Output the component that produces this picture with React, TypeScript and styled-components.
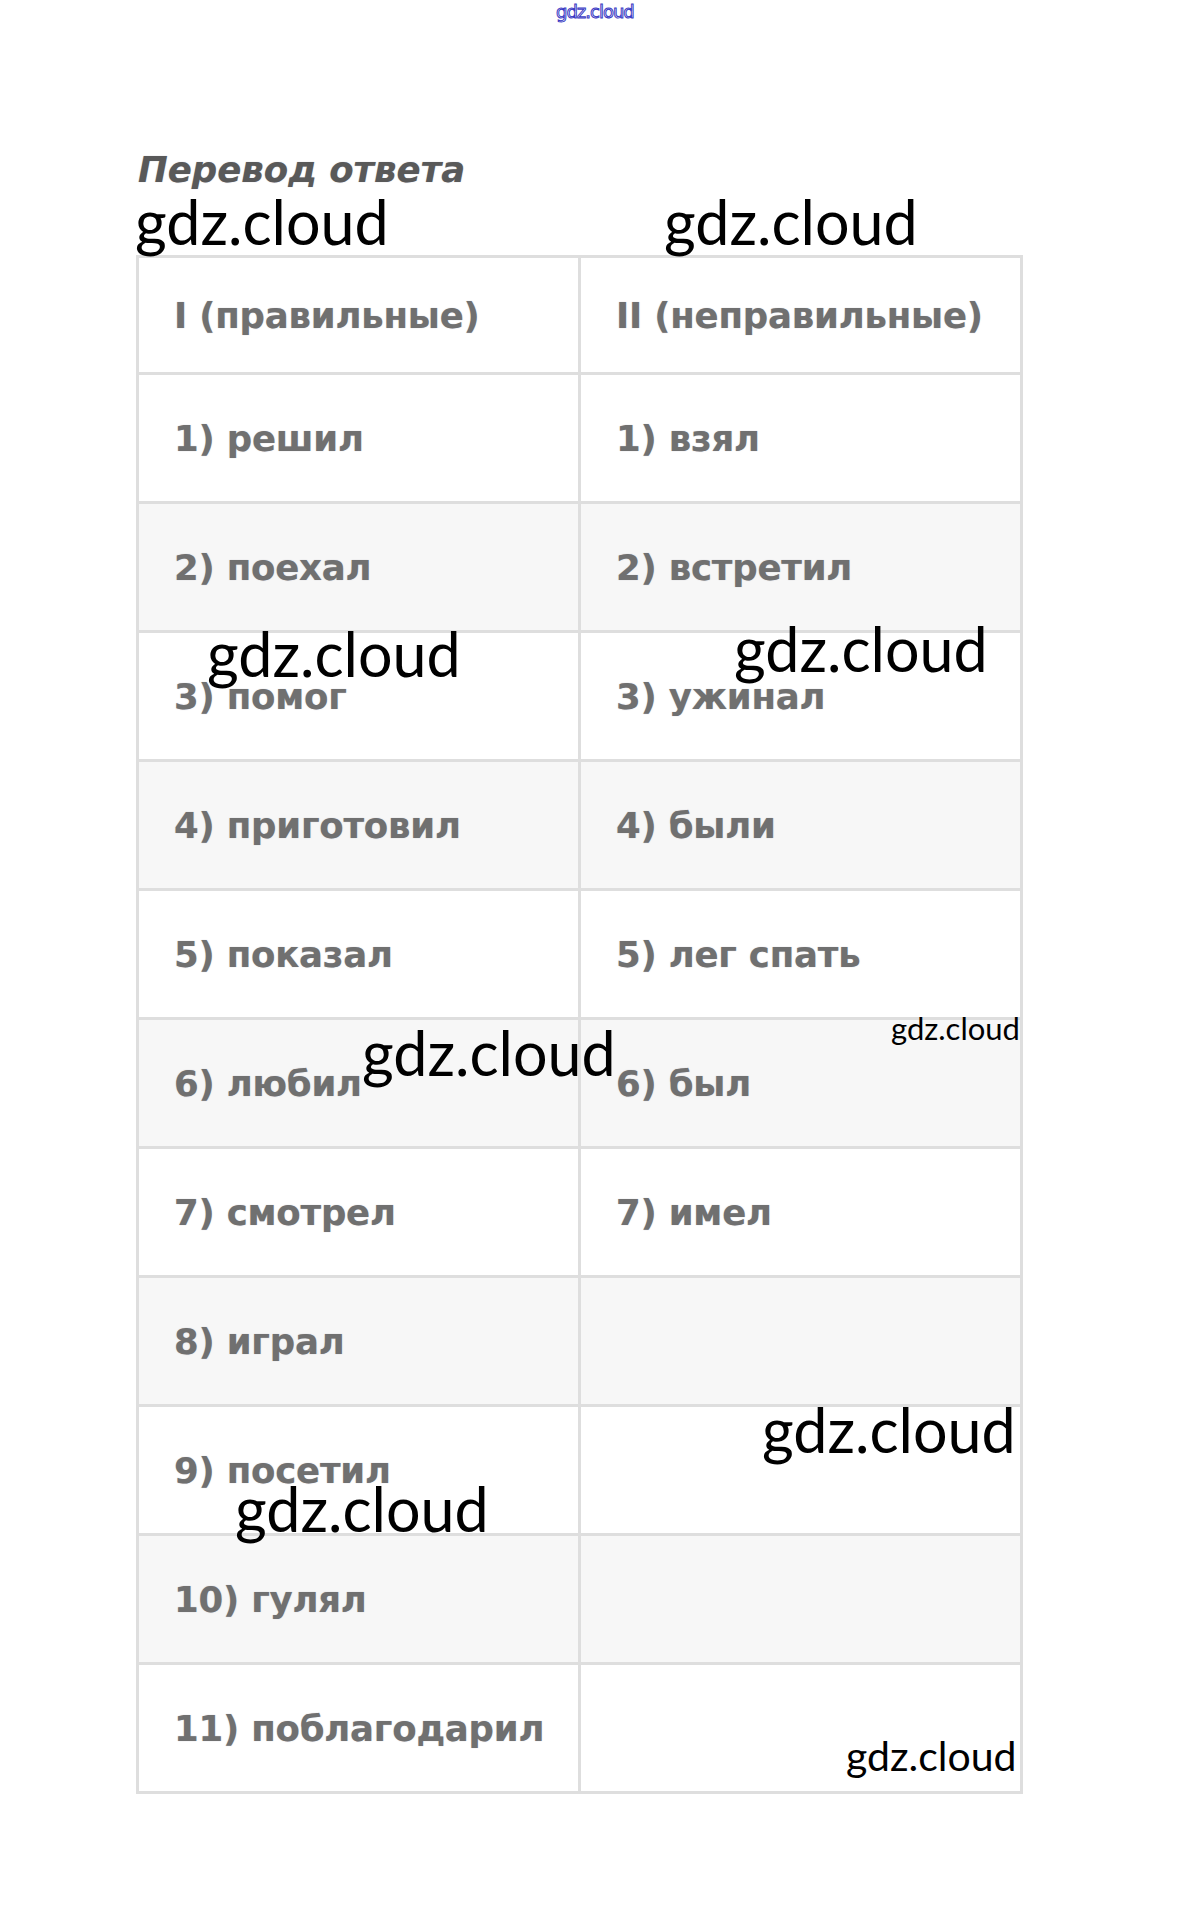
import React from "react";
import styled, { createGlobalStyle } from "styled-components";

const Global = createGlobalStyle`
  html, body { margin: 0; padding: 0; background: #ffffff; }
  body { font-family: "DejaVu Sans", Verdana, sans-serif; }
`;

const Page = styled.div`
  position: relative;
  width: 1189px;
  height: 1921px;
  overflow: hidden;
  background: #fff;
`;

const Content = styled.div`
  display: flex;
  flex-direction: column;
  padding: 149px 0 0 136px;
`;

const Title = styled.div`
  font-family: "DejaVu Sans", Verdana, sans-serif;
  font-style: italic;
  font-weight: 700;
  font-size: 35.5px;
  line-height: 41px;
  color: #595959;
  text-shadow: 0 0 1px rgba(120, 120, 140, 0.6);
  margin: 0 0 65px 2px;
`;

const Table = styled.table`
  width: 887px;
  border-collapse: collapse;
  table-layout: fixed;
  border: 3px solid #dedede;
`;

const Row = styled.tr<{ $shade?: boolean; $h: number }>`
  height: ${(p) => p.$h}px;
  background: ${(p) => (p.$shade ? "#f7f7f7" : "#ffffff")};
`;

const Cell = styled.td`
  border: 3px solid #dedede;
  padding: 0 0 0 35px;
  vertical-align: middle;
  font-family: "DejaVu Sans", Verdana, sans-serif;
  font-weight: 700;
  font-size: 35.5px;
  color: #707070;
  letter-spacing: -0.2px;
  white-space: nowrap;
  text-shadow: 0 0 1px rgba(110, 110, 130, 0.5);
`;

const Mark = styled.div<{ $size: number }>`
  position: absolute;
  font-family: Lato, "Open Sans", sans-serif;
  font-size: ${(p) => p.$size}px;
  line-height: 1;
  color: #000;
  white-space: nowrap;
`;

const TopMark = styled.div`
  position: absolute;
  left: 556px;
  top: 3px;
  font-family: "DejaVu Sans", Verdana, sans-serif;
  font-size: 18px;
  line-height: 1;
  letter-spacing: -1px;
  color: #ffffff;
  -webkit-text-stroke: 1px #3b3bc4;
`;

const rows: [string, string][] = [
  ["1) решил", "1) взял"],
  ["2) поехал", "2) встретил"],
  ["3) помог", "3) ужинал"],
  ["4) приготовил", "4) были"],
  ["5) показал", "5) лег спать"],
  ["6) любил", "6) был"],
  ["7) смотрел", "7) имел"],
  ["8) играл", ""],
  ["9) посетил", ""],
  ["10) гулял", ""],
  ["11) поблагодарил", ""],
];

const marks: { x: number; y: number; s: number }[] = [
  { x: 135, y: 191, s: 61 },
  { x: 664, y: 191, s: 61 },
  { x: 207, y: 623, s: 61 },
  { x: 734, y: 618, s: 61 },
  { x: 362, y: 1022, s: 61 },
  { x: 762, y: 1399, s: 61 },
  { x: 235, y: 1478, s: 61 },
  { x: 891, y: 1013, s: 31 },
  { x: 846, y: 1735, s: 41 },
];

export default function App() {
  return (
    <Page>
      <Global />
      <TopMark>gdz.cloud</TopMark>
      <Content>
        <Title>Перевод ответа</Title>
        <Table>
          <tbody>
            <Row $h={117}>
              <Cell>I (правильные)</Cell>
              <Cell>II (неправильные)</Cell>
            </Row>
            {rows.map(([a, b], i) => (
              <Row key={i} $h={129} $shade={i % 2 === 1}>
                <Cell>{a}</Cell>
                <Cell>{b}</Cell>
              </Row>
            ))}
          </tbody>
        </Table>
      </Content>
      {marks.map((m, i) => (
        <Mark key={i} $size={m.s} style={{ left: m.x, top: m.y }}>
          gdz.cloud
        </Mark>
      ))}
    </Page>
  );
}
